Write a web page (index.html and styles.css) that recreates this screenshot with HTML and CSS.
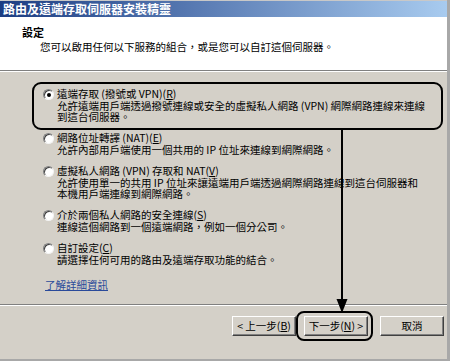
FILE: index.html
```html
<!DOCTYPE html>
<html lang="zh-Hant">
<head>
<meta charset="utf-8">
<link rel="stylesheet" href="styles.css">
</head>
<body>
<div class="window">
  <div class="titlebar">路由及遠端存取伺服器安裝精靈</div>
  <div class="header">
    <div class="h-title">設定</div>
    <div class="h-sub">您可以啟用任何以下服務的組合，或是您可以自訂這個伺服器。</div>
  </div>
  <div class="body">
    <div class="options">
      <div class="option">
        <span class="radio checked"></span>
        <div class="text">
          <div class="label">遠端存取 (撥號或 VPN)(<u>R</u>)</div>
          <div class="desc">允許遠端用戶端透過撥號連線或安全的虛擬私人網路 (VPN) 網際網路連線來連線<br>到這台伺服器。</div>
        </div>
      </div>
      <div class="option">
        <span class="radio"></span>
        <div class="text">
          <div class="label">網路位址轉譯 (NAT)(<u>E</u>)</div>
          <div class="desc">允許內部用戶端使用一個共用的 IP 位址來連線到網際網路。</div>
        </div>
      </div>
      <div class="option">
        <span class="radio"></span>
        <div class="text">
          <div class="label">虛擬私人網路 (VPN) 存取和 NAT(<u>V</u>)</div>
          <div class="desc">允許使用單一的共用 IP 位址來讓遠端用戶端透過網際網路連線到這台伺服器和<br>本機用戶端連線到網際網路。</div>
        </div>
      </div>
      <div class="option">
        <span class="radio"></span>
        <div class="text">
          <div class="label">介於兩個私人網路的安全連線(<u>S</u>)</div>
          <div class="desc">連線這個網路到一個遠端網路，例如一個分公司。</div>
        </div>
      </div>
      <div class="option">
        <span class="radio"></span>
        <div class="text">
          <div class="label">自訂設定(<u>C</u>)</div>
          <div class="desc">請選擇任何可用的路由及遠端存取功能的結合。</div>
        </div>
      </div>
    </div>
    <a class="link" href="#">了解詳細資訊</a>
  </div>
  <div class="footer">
    <button class="btn">&lt; 上一步(<u>B</u>)</button>
    <button class="btn next">下一步(<u>N</u>) &gt;</button>
    <button class="btn cancel">取消</button>
  </div>
  <svg class="annot" width="450" height="361" viewBox="0 0 450 361">
    <rect x="33" y="83" width="409" height="46" rx="8" ry="8" fill="none" stroke="#000" stroke-width="2"/>
    <line x1="342" y1="129" x2="342" y2="302" stroke="#000" stroke-width="2"/>
    <polygon points="336.5,299 347.5,299 342,313" fill="#000"/>
    <rect x="297" y="312" width="75" height="28" rx="7" ry="7" fill="none" stroke="#000" stroke-width="2"/>
  </svg>
</div>
</body>
</html>
```
FILE: styles.css
```css
* { box-sizing: border-box; }
html, body { margin: 0; padding: 0; background: #d4d0c8; }
body {
  font-family: "Noto Sans CJK TC", "Noto Sans", sans-serif;
  font-size: 10.5px;
  color: #000;
}
.window {
  position: relative;
  width: 450px;
  height: 361px;
  background: #d4d0c8;
  border-right: 3px solid #a8a8a8;
  border-bottom: 2px solid #a8a8a8;
  overflow: hidden;
}
.titlebar {
  height: 17px;
  border-top: 1px solid #c8c8c8;
  background: linear-gradient(to right, #1c3d82 0%, #5a7cb4 45%, #a8cbef 100%);
  color: #fff;
  font-weight: bold;
  font-size: 12px;
  line-height: 16px;
  padding-left: 3px;
  white-space: nowrap;
}
.header {
  height: 54px;
  background: #fff;
  border-bottom: 1px solid #808080;
  padding: 9px 0 0 22px;
}
.h-title {
  font-weight: bold;
  font-size: 11px;
  line-height: 13px;
}
.h-sub {
  margin: 1px 0 0 18px;
  line-height: 13px;
}
.body {
  height: 234px;
  border-top: 1px solid #fff;
  border-bottom: 1px solid #808080;
  padding: 16px 0 0 43px;
}
.option {
  display: flex;
  gap: 3px;
  margin-bottom: 10px;
}
.radio {
  flex: none;
  position: relative;
  width: 11px;
  height: 11px;
  margin-top: 1px;
  border-radius: 50%;
  background: #fff;
  border: 1px solid;
  border-color: #808080 #f4f4f4 #f4f4f4 #808080;
  box-shadow: inset 1px 1px 0 #404040;
}
.radio.checked::after {
  content: "";
  position: absolute;
  left: 3px;
  top: 3px;
  width: 4px;
  height: 4px;
  border-radius: 50%;
  background: #000;
}
.label {
  line-height: 12px;
  white-space: nowrap;
}
.desc {
  line-height: 11px;
  white-space: nowrap;
}
.link {
  display: inline-block;
  margin: 4px 0 0 2px;
  color: #2a4a9a;
  text-decoration: underline;
  line-height: 12px;
}
.footer {
  border-top: 1px solid #fff;
  display: flex;
  justify-content: flex-end;
  padding: 10px 3px 0 0;
}
.btn {
  width: 64px;
  height: 20px;
  padding: 0;
  background: #d4d0c8;
  font-family: inherit;
  font-size: 10.5px;
  line-height: 16px;
  color: #000;
  border: 1px solid;
  border-color: #fff #404040 #404040 #fff;
  box-shadow: inset -1px -1px 0 #808080;
}
.btn.next { margin-left: 8px; }
.btn.cancel { margin-left: 12px; }
.annot {
  position: absolute;
  left: 0;
  top: 0;
  pointer-events: none;
}
```
